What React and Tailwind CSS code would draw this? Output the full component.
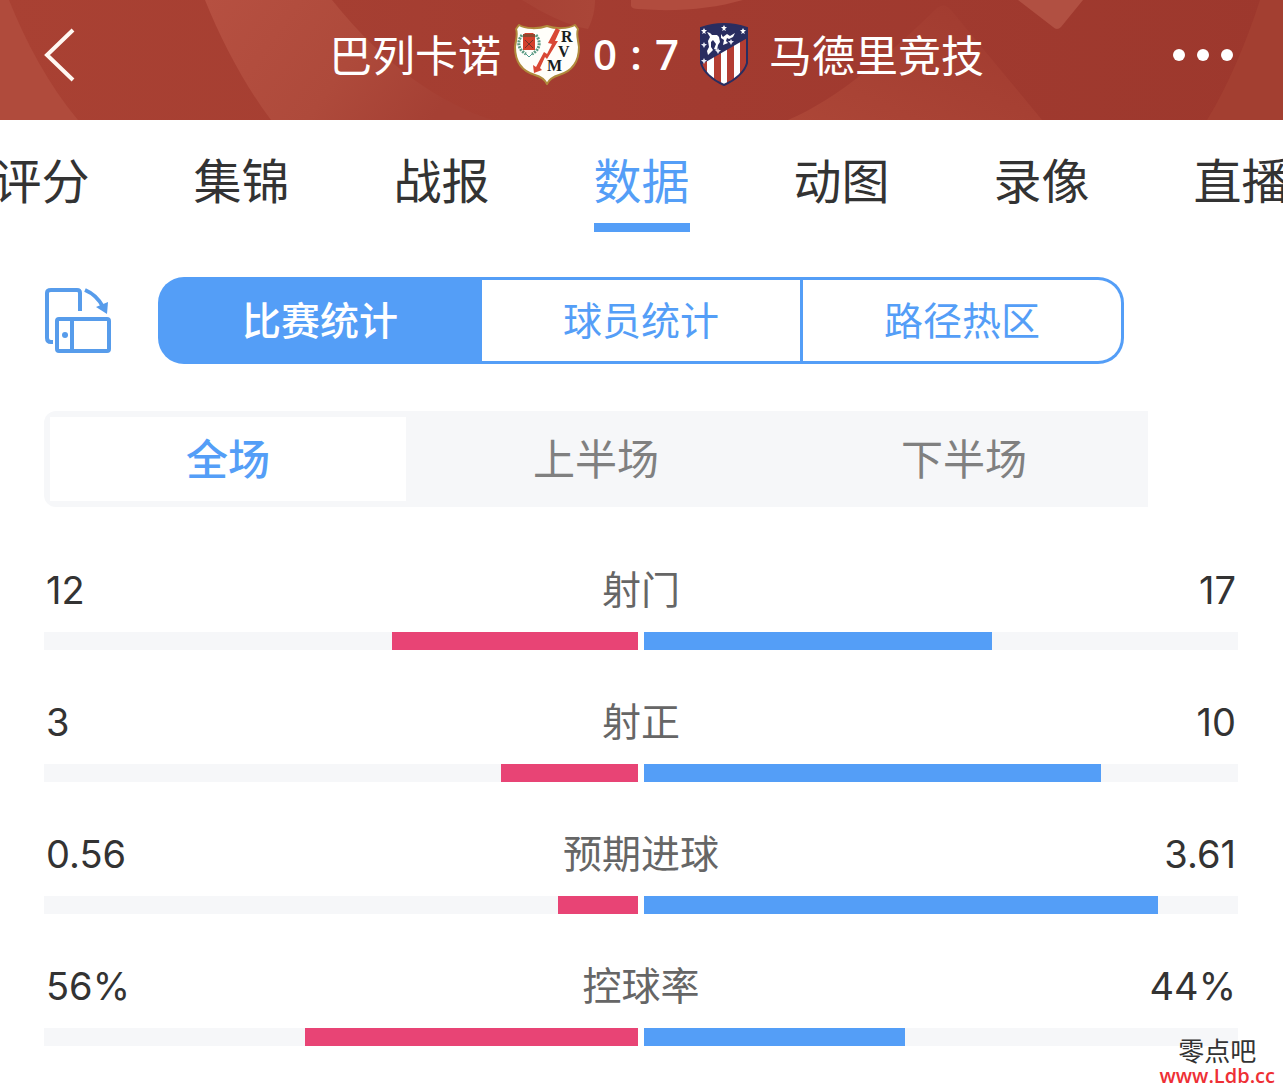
import React, { useState } from "react";

const TABS = ["评分", "集锦", "战报", "数据", "动图", "录像", "直播"];
const VIEWS = ["比赛统计", "球员统计", "路径热区"];
const PERIODS = ["全场", "上半场", "下半场"];
const STATS = [
  { label: "射门", home: "12", away: "17" },
  { label: "射正", home: "3", away: "10" },
  { label: "预期进球", home: "0.56", away: "3.61" },
  { label: "控球率", home: "56%", away: "44%" },
];

function HeaderPattern() {
  return (
    <svg
      className="absolute inset-0 h-full w-full"
      viewBox="0 0 1283 120"
      preserveAspectRatio="none"
      aria-hidden="true"
    >
      <defs>
        <linearGradient id="base" x1="0" x2="1" y1="0" y2="0">
          <stop offset="0" stopColor="#a94133" />
          <stop offset="0.25" stopColor="#a63f32" />
          <stop offset="0.55" stopColor="#a23b30" />
          <stop offset="1" stopColor="#9d382d" />
        </linearGradient>
        <linearGradient id="band" x1="0" x2="1" y1="0" y2="0.3">
          <stop offset="0" stopColor="#b65041" />
          <stop offset="0.6" stopColor="#ae4a3b" />
          <stop offset="1" stopColor="#a54034" />
        </linearGradient>
        <linearGradient id="peak" x1="0" x2="1" y1="1" y2="0">
          <stop offset="0" stopColor="#ac4637" />
          <stop offset="1" stopColor="#a03a2f" />
        </linearGradient>
        <linearGradient id="blob" x1="0" x2="1" y1="0" y2="0">
          <stop offset="0" stopColor="#a74235" />
          <stop offset="1" stopColor="#aa4638" />
        </linearGradient>
      </defs>
      <rect width="1283" height="120" fill="url(#base)" />
      <path d="M0 0H9C26 42 48 84 78 120H0Z" fill="#b04b3c" />
      <path d="M205 0C222 42 244 84 271 120H492C440 103 385 66 332 0Z" fill="url(#band)" />
      <path d="M522 0C545 14 566 25 588 29C593 19 595 9 595 0Z" fill="url(#blob)" />
      <path d="M631 0V6Q632 9 638 9C676 12 712 9 743 0Z" fill="#b14c3e" />
      <path d="M788 120C838 99 893 51 937 8Q944 2 951 10L1042 120Z" fill="url(#peak)" />
      <path d="M1018 0L1053 27Q1057 31 1061 27L1083 0Z" fill="#b15042" />
      <path d="M1260 0C1246 42 1230 82 1207 120H1283V0Z" fill="#a33f31" />
    </svg>
  );
}

function RayoCrest() {
  return (
    <svg className="h-16 w-[68px] shrink-0" viewBox="0 0 68 64" role="img" aria-label="巴列卡诺队徽">
      <path
        d="M6 2C12 6 26 6 34 3C42 6 55 6 62 2L65 6C63 11 65 16 66 24C66 42 56 49 46 52C39 54 36 57 34 61C32 57 29 54 22 52C12 49 2 42 2 24C3 16 5 11 3 6Z"
        fill="#fffefa"
        stroke="#b08a3c"
        strokeWidth="2"
        strokeLinejoin="round"
      />
      <path d="M9 12C3 20 6 27 13 31M23 12C29 20 26 27 19 31" fill="none" stroke="#5b9a82" strokeWidth="3" strokeDasharray="2 1" />
      <path d="M13 31L16 34L19 31" fill="none" stroke="#4e9c91" strokeWidth="1" />
      <path d="M10 12L12 10L20 10L22 12V27H10Z" fill="#d2402c" />
      <path d="M10 11H22V14H10Z" fill="#8d4930" />
      <path d="M12 17L20 25M20 17L12 25" stroke="#71352a" strokeWidth="1" />
      <path
        d="M43 5L47 7L42 18L45 18L34 36L32 34L27 45L29 47L21 50L20 42L23 44L31 29L34 31L39 21L35 20Z"
        fill="#d94835"
      />
      <g fill="#17201e" fontFamily="'Liberation Serif', serif" fontWeight="700" fontSize="16">
        <text x="48" y="19">R</text>
        <text x="45" y="34">V</text>
        <text x="34" y="48">M</text>
      </g>
    </svg>
  );
}

function AtleticoCrest() {
  return (
    <svg className="h-16 w-[50px] shrink-0" viewBox="0 0 50 64" role="img" aria-label="马德里竞技队徽">
      <defs>
        <clipPath id="shield">
          <path d="M2 5Q25-3 48 5V40C46 48 37 57 25 62C13 57 4 48 2 40Z" />
        </clipPath>
      </defs>
      <g clipPath="url(#shield)">
        <rect width="50" height="64" fill="#b43d32" />
        <path d="M8 0H15V64H8ZM22 0H28V64H22ZM35 0H41V64H35Z" fill="#fff" />
        <path d="M0 0H50V14L0 43Z" fill="#292d60" />
      </g>
      <path
        d="M2 5Q25-3 48 5V40C46 48 37 57 25 62C13 57 4 48 2 40Z"
        fill="none"
        stroke="#292d60"
        strokeWidth="2"
      />
      <path
        d="M8 9L11 10L13 12L18 12L20 14L21 19L19 22L18 27L15 26L17 21L14 17L12 19V24L14 27L9 32L8 28L10 24L9 18L11 14ZM22 11L24 14L28 11L31 13L36 10L34 14L30 16L28 15L27 18L29 20L24 22L25 17L22 15Z"
        fill="#fff"
      />
      <path
        d="M25 2L26 4H28L26 6L27 8L25 7L23 8L24 6L22 4H24ZM5 5L6 7H8L6 9L7 11L5 10L3 11L4 9L2 7H4ZM44 5L45 7H47L45 9L46 11L44 10L42 11L43 9L41 7H43Z"
        fill="#fff"
      />
      <path
        d="M5 19L6 21H8L6 23L5 25L4 23L2 21H4ZM5 35L6 37H8L6 39L5 41L4 39L2 37H4ZM19 25L20 27H22L20 29L19 31L18 29L16 27H18ZM32 16L33 18H35L33 20L32 22L31 20L29 18H31Z"
        fill="#e8eaf4"
      />
    </svg>
  );
}

function RotateIcon() {
  return (
    <svg className="h-[68px] w-[68px]" viewBox="0 2 68 68" fill="none" stroke="#579ceb" strokeWidth="4" aria-hidden="true">
      <path d="M9 57H7Q3 57 3 53V8Q3 5 7 5H33Q36 5 36 8V26" />
      <rect x="13" y="34" width="52" height="32" rx="2" />
      <path d="M28 34V66" />
      <circle cx="21" cy="50" r="3" fill="#579ceb" stroke="none" />
      <path d="M41 5Q53 10 59 22" />
      <path d="M52 22L64 17L63 29Z" fill="#579ceb" stroke="none" />
    </svg>
  );
}

function StatRow({ label, home, away }) {
  const h = parseFloat(home);
  const a = parseFloat(away);
  const share = (h / (h + a)) * 100;
  return (
    <li className="mb-[42px]">
      <div className="grid h-[60px] grid-cols-3 items-center px-0.5 text-[38px] text-[#333]">
        <span>{home}</span>
        <span className="text-center text-[39px] text-[#666]">{label}</span>
        <span className="text-right">{away}</span>
      </div>
      <div className="mt-3 grid h-[18px] grid-cols-2 gap-1.5">
        <div className="flex justify-end bg-[#f6f7f9]">
          <div className="bg-[#e84475]" style={{ width: `${share}%` }} />
        </div>
        <div className="bg-[#f6f7f9]">
          <div className="h-full bg-[#549ef7]" style={{ width: `${100 - share}%` }} />
        </div>
      </div>
    </li>
  );
}

export default function App() {
  const [tab, setTab] = useState("数据");
  const [view, setView] = useState("比赛统计");
  const [period, setPeriod] = useState("全场");

  return (
    <div className="relative min-h-screen overflow-hidden bg-white font-['Inter','Noto_Sans_CJK_SC',sans-serif]">
      <header className="relative h-[120px] overflow-hidden">
        <HeaderPattern />
        <div className="relative flex h-[110px] items-center justify-between pr-[50px] pl-11 text-white">
          <button type="button" aria-label="返回" className="w-24">
            <svg className="h-[54px] w-8" viewBox="0 0 32 54" fill="none" stroke="#fff8f2" strokeWidth="4" aria-hidden="true">
              <path d="M29 2L3 27L29 52" />
            </svg>
          </button>
          <h1 className="flex items-center font-['Noto_Sans_CJK_SC',sans-serif] text-[42px] font-normal whitespace-nowrap">
            <span className="pb-1 text-[43px]">巴列卡诺</span>
            <span className="ml-3 flex items-center">
              <RayoCrest />
            </span>
            <span className="mx-3 flex w-[86px] justify-between pb-1 font-['Open_Sans',sans-serif] font-semibold">
              <span>0</span>
              <span>:</span>
              <span>7</span>
            </span>
            <span className="mr-5 ml-2 flex items-center">
              <AtleticoCrest />
            </span>
            <span className="pb-1 text-[43px]">马德里竞技</span>
          </h1>
          <button type="button" aria-label="更多" className="flex gap-3">
            <span className="size-3 rounded-full bg-white" />
            <span className="size-3 rounded-full bg-white" />
            <span className="size-3 rounded-full bg-white" />
          </button>
        </div>
      </header>

      <nav className="flex justify-center gap-[104px] overflow-hidden pt-[30px]">
        {TABS.map((name) => (
          <button
            key={name}
            type="button"
            onClick={() => setTab(name)}
            className={
              "shrink-0 border-b-[9px] pb-2.5 text-5xl leading-[63px] whitespace-nowrap " +
              (tab === name ? "border-[#549ef7] text-[#549ef7]" : "border-transparent text-[#333]")
            }
          >
            {name}
          </button>
        ))}
      </nav>

      <main className="pr-[45px] pl-11">
        <div className="mt-[45px] mr-[114px] flex items-center gap-[46px]">
          <button type="button" aria-label="横屏查看" className="shrink-0">
            <RotateIcon />
          </button>
          <div className="grid h-[87px] flex-1 grid-cols-3 gap-[3px] rounded-[26px] bg-[#549ef7] p-[3px]">
            {VIEWS.map((name) => (
              <button
                key={name}
                type="button"
                onClick={() => setView(name)}
                className={
                  "text-[39px] leading-none whitespace-nowrap first:rounded-l-[23px] last:rounded-r-[23px] " +
                  (view === name ? "font-medium text-white" : "bg-white text-[#549ef7]")
                }
              >
                {name}
              </button>
            ))}
          </div>
        </div>

        <div className="mt-[47px] mr-[90px] grid h-24 grid-cols-3 rounded-l-xl bg-[#f6f7f9]">
          {PERIODS.map((name) => (
            <button
              key={name}
              type="button"
              onClick={() => setPeriod(name)}
              className={
                "m-1.5 pt-0.5 text-[42px] leading-none whitespace-nowrap " +
                (period === name ? "bg-white font-medium text-[#549ef7]" : "text-[#808080]")
              }
            >
              {name}
            </button>
          ))}
        </div>

        <ul className="mt-[53px]">
          {STATS.map((s) => (
            <StatRow key={s.label} {...s} />
          ))}
        </ul>
      </main>

      <a href="#ldb" className="absolute right-2 bottom-0 flex flex-col items-center">
        <span className="text-[26px] leading-6 text-[#333]">零点吧</span>
        <span className="font-['Open_Sans',sans-serif] text-[20px] leading-6 font-semibold text-[#ee2f35]">www.Ldb.cc</span>
      </a>
    </div>
  );
}
